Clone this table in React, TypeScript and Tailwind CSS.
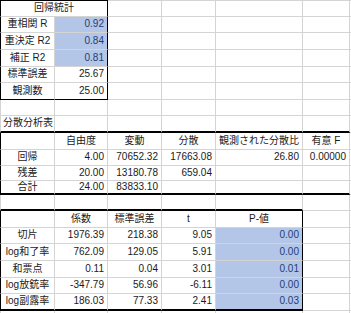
import React from 'react'

type Spec = { t?: string; a?: 'l' | 'c' | 'r'; c?: string }
type Row = { h: string; cells: Spec[] }

const G = 'border-l border-l-[#d4d4d4]'
const L = 'border-l border-l-black'
const BLUE = 'bg-[#b4c6e7] text-[#1f3d7a]'
const THICK = 'border-b-2 border-b-black'

const e = (n: number, c = ''): Spec[] => Array.from({ length: n }, () => ({ c }))

const rows: Row[] = [
  {
    h: 'h-[17px]',
    cells: [
      { t: '回帰統計', a: 'c', c: `${L} col-span-2 border-t border-t-black border-r-black` },
      ...e(5, 'border-t'),
    ],
  },
  { h: 'h-[16px]', cells: [{ t: '重相関 R', a: 'c', c: L }, { t: '0.92', c: `${BLUE} border-r-black` }, ...e(5)] },
  { h: 'h-[17px]', cells: [{ t: '重決定 R2', a: 'c', c: L }, { t: '0.84', c: `${BLUE} border-r-black` }, ...e(5)] },
  { h: 'h-[17px]', cells: [{ t: '補正 R2', a: 'c', c: L }, { t: '0.81', c: `${BLUE} border-r-black` }, ...e(5)] },
  { h: 'h-[16px]', cells: [{ t: '標準誤差', a: 'c', c: L }, { t: '25.67', c: 'border-r-black' }, ...e(5)] },
  {
    h: 'h-[17px]',
    cells: [
      { t: '観測数', a: 'c', c: `${L} border-b-black` },
      { t: '25.00', c: 'border-r-black border-b-black' },
      ...e(5),
    ],
  },
  { h: 'h-[16px]', cells: [{ c: G }, ...e(6)] },
  {
    h: 'h-[17px]',
    cells: [{ t: '分散分析表', a: 'l', c: `${G} ${THICK}` }, ...e(5, THICK), { c: '' }],
  },
  {
    h: 'h-[17px]',
    cells: [
      { c: L },
      { t: '自由度', a: 'c' },
      { t: '変動', a: 'c' },
      { t: '分散', a: 'c' },
      { t: '観測された分散比', a: 'c' },
      { t: '有意 F', a: 'c' },
      { c: '' },
    ],
  },
  {
    h: 'h-[16px]',
    cells: [
      { t: '回帰', a: 'c', c: L },
      { t: '4.00' },
      { t: '70652.32' },
      { t: '17663.08' },
      { t: '26.80' },
      { t: '0.00000' },
      { c: '' },
    ],
  },
  {
    h: 'h-[15px]',
    cells: [{ t: '残差', a: 'c', c: L }, { t: '20.00' }, { t: '13180.78' }, { t: '659.04' }, ...e(3)],
  },
  {
    h: 'h-[14px]',
    cells: [
      { t: '合計', a: 'c', c: `${L} ${THICK}` },
      { t: '24.00', c: THICK },
      { t: '83833.10', c: THICK },
      ...e(3, THICK),
      { c: '' },
    ],
  },
  { h: 'h-[16px]', cells: [{ c: `${G} ${THICK}` }, ...e(4, THICK), ...e(2)] },
  {
    h: 'h-[17px]',
    cells: [
      { c: L },
      { t: '係数', a: 'c' },
      { t: '標準誤差', a: 'c' },
      { t: 't', a: 'c' },
      { t: 'P-値', a: 'c', c: 'border-r-black' },
      ...e(2),
    ],
  },
]

const coefs = [
  ['切片', '1976.39', '218.38', '9.05', '0.00'],
  ['log和了率', '762.09', '129.05', '5.91', '0.00'],
  ['和票点', '0.11', '0.04', '3.01', '0.01'],
  ['log放銃率', '-347.79', '56.96', '-6.11', '0.00'],
  ['log副露率', '186.03', '77.33', '2.41', '0.03'],
]
const coefHeights = ['h-[16px]', 'h-[17px]', 'h-[17px]', 'h-[16px]', 'h-[17px]']

coefs.forEach((r, i) => {
  const last = i === coefs.length - 1
  const b = last ? THICK : ''
  rows.push({
    h: coefHeights[i],
    cells: [
      { t: r[0], a: 'c', c: `${L} ${b}` },
      { t: r[1], c: b },
      { t: r[2], c: b },
      { t: r[3], c: b },
      { t: r[4], c: `${BLUE} border-r-black ${b}` },
      ...e(2),
    ],
  })
})

rows.push({ h: 'h-[8px]', cells: [{ c: G }, ...e(6)] })

function Cell({ spec }: { spec: Spec }) {
  const align =
    spec.a === 'l' ? 'justify-start pl-[2px]' : spec.a === 'c' ? 'justify-center' : 'justify-end pr-[3px]'
  return (
    <div
      className={`flex items-center pb-[1px] whitespace-nowrap border-r border-b border-[#d4d4d4] ${align} ${spec.c ?? ''}`}
    >
      {spec.t}
    </div>
  )
}

export default function App() {
  return (
    <div className="w-[351px] h-[313px] overflow-hidden bg-white text-[10px] leading-none text-[#1a1a1a] font-['Liberation_Sans','Noto_Sans_CJK_JP',sans-serif]">
      {rows.map((row, i) => (
        <div key={i} className={`grid grid-cols-[55px_53px_54px_54px_87px_47px_1fr] ${row.h}`}>
          {row.cells.map((c, j) => (
            <Cell key={j} spec={c} />
          ))}
        </div>
      ))}
    </div>
  )
}
